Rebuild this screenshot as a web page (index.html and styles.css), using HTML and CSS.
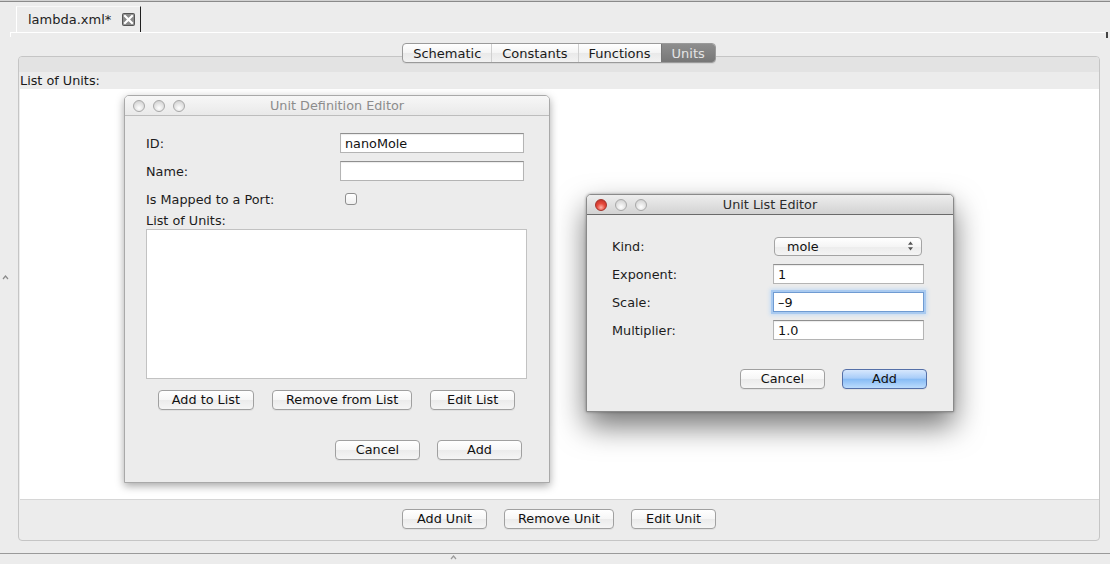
FILE: index.html
```html
<!DOCTYPE html>
<html>
<head>
<meta charset="utf-8">
<title>lambda.xml</title>
<link rel="stylesheet" href="styles.css">
</head>
<body>
<div class="app">
  <div class="tabstrip">
    <div class="tab">
      <span class="tab-title">lambda.xml*</span>
      <svg class="tab-close" width="13" height="13" viewBox="0 0 13 13">
        <rect x="0.5" y="0.5" width="12" height="12" rx="1" fill="#8a8a8a" stroke="#555"/>
        <path d="M3 3 L10 10 M10 3 L3 10" stroke="#fff" stroke-width="2.2" stroke-linecap="square"/>
      </svg>
    </div>
  </div>
  <div class="tabline-row">
    <div class="tabline"></div>
    <div class="tabline-end"></div>
  </div>
  <div class="editor">
    <div class="segmented">
      <span class="seg">Schematic</span>
      <span class="seg">Constants</span>
      <span class="seg">Functions</span>
      <span class="seg seg-selected">Units</span>
    </div>
    <div class="panel">
      <div class="panel-band"></div>
      <div class="panel-label">List of Units:</div>
      <div class="unit-list"></div>
      <div class="panel-buttons">
        <button class="btn">Add Unit</button>
        <button class="btn">Remove Unit</button>
        <button class="btn">Edit Unit</button>
      </div>
    </div>
  </div>
  <div class="statusline"></div>
</div>

<svg class="split-handle split-left" width="7" height="5" viewBox="0 0 7 5"><path d="M1 4 L3.5 1 L6 4" fill="none" stroke="#8a8a8a" stroke-width="1.2"/></svg>
<svg class="split-handle split-bottom" width="7" height="5" viewBox="0 0 7 5"><path d="M1 4 L3.5 1 L6 4" fill="none" stroke="#9a9a9a" stroke-width="1.2"/></svg>

<div class="dialog dialog-def">
  <div class="titlebar titlebar-inactive">
    <div class="lights">
      <span class="light"></span><span class="light"></span><span class="light"></span>
    </div>
    <div class="title">Unit Definition Editor</div>
    <div></div>
  </div>
  <div class="dialog-body def-body">
    <div class="def-grid">
      <label class="lbl">ID:</label>
      <input class="field" type="text" value="nanoMole" readonly>
      <label class="lbl">Name:</label>
      <input class="field" type="text" value="" readonly>
      <label class="lbl">Is Mapped to a Port:</label>
      <div class="check-cell"><span class="checkbox"></span></div>
    </div>
    <div class="list-label">List of Units:</div>
    <div class="def-list"></div>
    <div class="def-list-buttons">
      <button class="btn">Add to List</button>
      <button class="btn">Remove from List</button>
      <button class="btn">Edit List</button>
    </div>
    <div class="dialog-actions def-actions">
      <button class="btn">Cancel</button>
      <button class="btn">Add</button>
    </div>
  </div>
</div>

<div class="dialog dialog-list">
  <div class="titlebar titlebar-active">
    <div class="lights">
      <span class="light light-red"></span><span class="light"></span><span class="light"></span>
    </div>
    <div class="title">Unit List Editor</div>
    <div></div>
  </div>
  <div class="dialog-body list-body">
    <div class="list-grid">
      <label class="lbl">Kind:</label>
      <div class="select">
        <span>mole</span>
        <svg width="7" height="10" viewBox="0 0 7 10"><path d="M3.5 0.5 L6 3.8 L1 3.8 Z M3.5 9.5 L6 6.2 L1 6.2 Z" fill="#555"/></svg>
      </div>
      <label class="lbl">Exponent:</label>
      <input class="field" type="text" value="1" readonly>
      <label class="lbl">Scale:</label>
      <input class="field field-focus" type="text" value="–9" readonly>
      <label class="lbl">Multiplier:</label>
      <input class="field" type="text" value="1.0" readonly>
    </div>
    <div class="dialog-actions list-actions">
      <button class="btn">Cancel</button>
      <button class="btn btn-default">Add</button>
    </div>
  </div>
</div>
</body>
</html>
```
FILE: styles.css
```css
* { box-sizing: border-box; }
html, body { margin: 0; padding: 0; }
body {
  width: 1110px;
  height: 564px;
  background: #ececec;
  font-family: "DejaVu Sans", "Liberation Sans", sans-serif;
  font-size: 12.8px;
  color: #1c1c1c;
  overflow: hidden;
  position: relative;
}

.app {
  height: 564px;
  display: flex;
  flex-direction: column;
  border-top: 1px solid #d2d2d2;
}

/* tab strip */
.tabstrip {
  height: 31px;
  border-top: 1px solid #8a8a8a;
  display: flex;
  align-items: flex-end;
  padding-left: 16px;
}
.tab {
  width: 125px;
  height: 26px;
  display: flex;
  align-items: center;
  padding-left: 11px;
  padding-right: 5px;
  border-left: 1px solid #fff;
  border-top: 1px solid #f7f7f7;
  border-right: 1px solid #1f1f1f;
  color: #222;
  font-size: 13px;
}
.tab-close { margin-left: auto; display: block; }

.tabline-row {
  display: flex;
  align-items: flex-start;
  height: 5px;
  padding-left: 10px;
  padding-right: 2px;
}
.tabline {
  flex: 1;
  height: 5px;
  border-top: 1px solid #fff;
  border-left: 1px solid #fff;
}
.tabline-end {
  width: 2px;
  height: 6px;
  background: #444;
  margin-left: 1px;
}

/* editor */
.editor {
  display: flex;
  flex-direction: column;
  margin: 0 10px 0 18px;
  padding-top: 6px;
}
.segmented {
  align-self: center;
  display: flex;
  height: 20px;
  border: 1px solid #9a9a9a;
  border-radius: 4px;
  background: linear-gradient(#ffffff, #f4f4f4 50%, #e9e9e9 51%, #f2f2f2);
  position: relative;
  z-index: 1;
  margin-bottom: -7px;
  overflow: hidden;
  box-shadow: 0 1px 0 rgba(0,0,0,0.06);
  font-size: 13px;
}
.seg {
  display: flex;
  align-items: center;
  padding: 0 10px;
  color: #1a1a1a;
  border-left: 1px solid #d0d0d0;
}
.seg:first-child { border-left: none; }
.seg-selected {
  background: linear-gradient(#8e8e8e, #777777);
  color: #e4e4e4;
  border-left: 1px solid #777;
}

.panel {
  height: 485px;
  border: 1px solid #c5c5c5;
  border-radius: 4px;
  background: #ececec;
  display: flex;
  flex-direction: column;
}
.panel-band {
  height: 15px;
  background: #e3e3e3;
  border-radius: 3px 3px 0 0;
}
.panel-label {
  height: 17px;
  line-height: 17px;
  padding-left: 1px;
  color: #1a1a1a;
}
.unit-list {
  height: 411px;
  margin-left: 1px;
  background: #fff;
  border-bottom: 1px solid #d6d6d6;
}
.panel-buttons {
  margin-top: 9px;
  display: flex;
  justify-content: center;
  gap: 17px;
}

.statusline {
  margin-top: 12px;
  border-top: 1px solid #9a9a9a;
}

.split-handle { position: absolute; display: block; }
.split-left { left: 2px; top: 275px; }
.split-bottom { left: 450px; top: 555px; }

/* buttons */
.btn {
  flex: none;
  height: 20px;
  min-width: 85px;
  padding: 0 13px;
  border: 1px solid #a0a0a0;
  border-radius: 4px;
  background: linear-gradient(#ffffff, #f6f6f6 50%, #ebebeb 51%, #f5f5f5);
  font-family: inherit;
  font-size: 12.8px;
  color: #111;
  line-height: 18px;
  box-shadow: 0 1px 0 rgba(0,0,0,0.05);
}
.btn-default {
  background: linear-gradient(#d6e7fd, #a9cdf9 45%, #88bcf5 52%, #bcdcfd);
  border-color: #5570a8;
}

/* dialogs */
.dialog {
  position: absolute;
  background: #ececec;
  border: 1px solid #a9a9a9;
  border-radius: 5px 5px 0 0;
  display: flex;
  flex-direction: column;
}
.dialog-def {
  left: 124px;
  top: 95px;
  width: 426px;
  height: 388px;
  box-shadow: 0 3px 9px rgba(0,0,0,0.35);
}
.dialog-list {
  left: 586px;
  top: 194px;
  width: 368px;
  height: 218px;
  border-color: #8a8a8a;
  box-shadow: 0 14px 30px rgba(0,0,0,0.55), 0 0 3px rgba(0,0,0,0.35);
}

.titlebar {
  height: 20px;
  display: grid;
  grid-template-columns: 1fr auto 1fr;
  align-items: center;
  border-radius: 4px 4px 0 0;
}
.titlebar-inactive {
  background: linear-gradient(#f7f7f7, #e9e9e9);
  border-bottom: 1px solid #bdbdbd;
}
.titlebar-active {
  background: linear-gradient(#eeeeee, #d2d2d2);
  border-bottom: 1px solid #6a6a6a;
}
.title { font-size: 12.8px; }
.titlebar-inactive .title { color: #8c8c8c; }
.titlebar-active .title { color: #2c2c2c; }

.lights {
  display: flex;
  gap: 8px;
  padding-left: 8px;
}
.light {
  width: 12px;
  height: 12px;
  border-radius: 50%;
  border: 1px solid #a8a8a8;
  background: radial-gradient(circle at 50% 70%, #ffffff, #e6e6e6 45%, #c9c9c9);
}
.light-red {
  border-color: #a3322a;
  background: radial-gradient(circle at 50% 75%, #ffb2a6, #e6493c 45%, #b92b22);
}

.dialog-body { display: flex; flex-direction: column; }

.lbl { color: #1c1c1c; }

.field {
  height: 20px;
  margin: 0;
  padding: 0 4px;
  border: 1px solid #b4b4b4;
  border-top-color: #8f8f8f;
  background: #fff;
  font-family: inherit;
  font-size: 12.8px;
  color: #111;
  box-shadow: inset 0 1px 1px rgba(0,0,0,0.08);
  outline: none;
}
.field-focus {
  border-color: #6f9bd2;
  box-shadow: 0 0 0 2px #a9caf0, 0 0 4px 3px #c3dbf5;
}

/* definition editor */
.def-body { padding: 17px 27px 0 21px; }
.def-grid {
  display: grid;
  grid-template-columns: 194px 184px;
  grid-auto-rows: 20px;
  row-gap: 8px;
  align-items: center;
}
.check-cell { display: flex; align-items: center; padding-left: 5px; }
.checkbox {
  width: 12px;
  height: 12px;
  border: 1px solid #8f8f8f;
  border-radius: 3px;
  background: linear-gradient(#ffffff, #f0f0f0);
}
.list-label {
  margin-top: 4px;
  height: 16px;
  line-height: 16px;
}
.def-list {
  width: 381px;
  height: 150px;
  background: #fff;
  border: 1px solid #c2c2c2;
}
.def-list-buttons {
  width: 381px;
  margin-top: 11px;
  display: flex;
  justify-content: center;
  gap: 18px;
}
.dialog-actions {
  display: flex;
  justify-content: flex-end;
  gap: 17px;
}
.def-actions { margin-top: 30px; }

/* unit list editor */
.list-body { padding: 21px 26px 0 25px; }
.list-grid {
  display: grid;
  grid-template-columns: 161px 151px;
  grid-auto-rows: 20px;
  row-gap: 8px;
  align-items: center;
}
.select {
  width: 148px;
  height: 19px;
  margin-left: 1px;
  display: flex;
  align-items: center;
  justify-content: space-between;
  padding: 0 7px 0 12px;
  border: 1px solid #a4a4a4;
  border-radius: 4px;
  background: linear-gradient(#ffffff, #f5f5f5 50%, #ececec 51%, #f4f4f4);
  color: #111;
}
.select svg { display: block; }
.list-actions { margin-top: 29px; }
```
